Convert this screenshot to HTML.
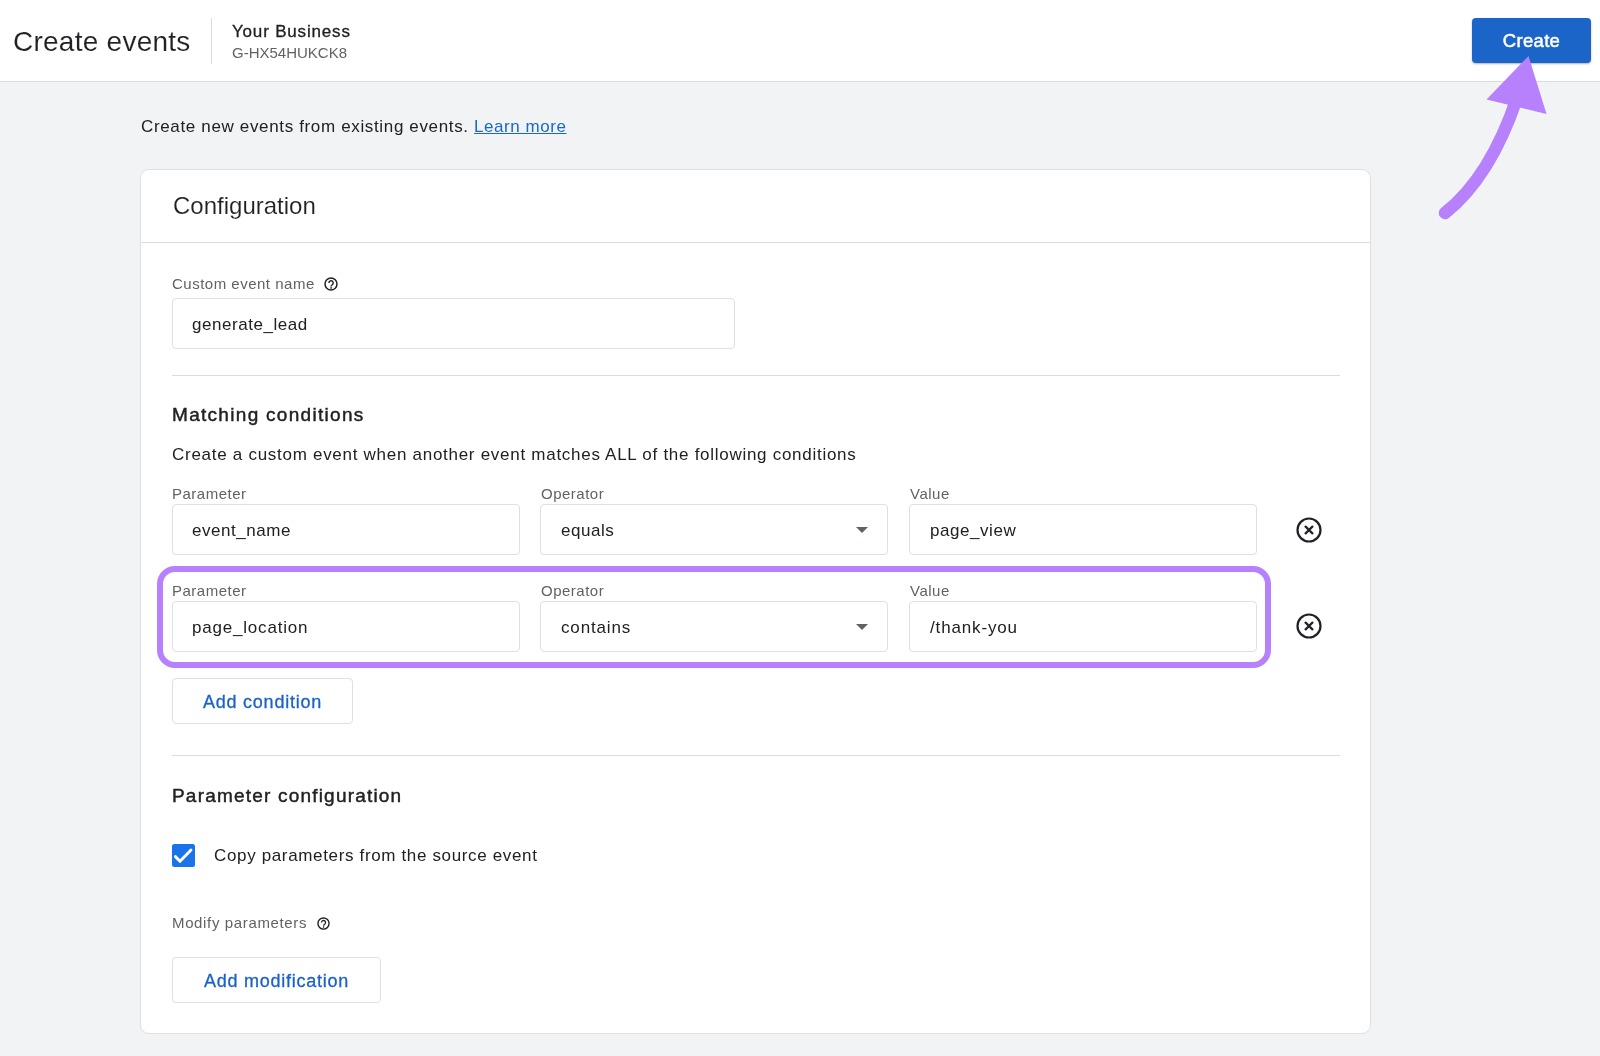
<!DOCTYPE html>
<html><head><meta charset="utf-8">
<style>
*{box-sizing:border-box;margin:0;padding:0}
html,body{will-change:transform;width:1600px;height:1056px;overflow:hidden;background:#f1f3f4;font-family:"Liberation Sans",sans-serif;color:#202124}
.a{position:absolute;white-space:nowrap}
#hdr{position:absolute;left:0;top:0;width:1600px;height:82px;background:#fff;border-bottom:1px solid #dadce0}
.title{left:13px;top:24px;font-size:28px;letter-spacing:.25px;-webkit-text-stroke:.12px #fff;line-height:36px;color:#202124}
.vdiv{left:211px;top:18px;width:1px;height:46px;background:#dadce0}
.biz{left:232px;top:21px;font-size:17px;font-weight:400;line-height:22px;letter-spacing:.82px;-webkit-text-stroke:.3px #202124}
.gid{left:232px;top:43px;font-size:15px;line-height:20px;color:#5f6368}
.cbtn{left:1472px;top:18px;width:119px;height:45px;background:#1b65c9;border-radius:4px;box-shadow:0 1px 2px rgba(0,0,0,.3);color:#fff;font-size:18.5px;font-weight:400;text-align:center;line-height:45px;letter-spacing:.3px;-webkit-text-stroke:.5px #fff}
.intro{left:141px;top:117px;font-size:17px;line-height:20px;letter-spacing:.65px}
.intro span{color:#1967d2;text-decoration:underline;letter-spacing:.55px}
#card{position:absolute;left:140px;top:169px;width:1231px;height:865px;background:#fff;border:1px solid #dfe0e2;border-radius:9px}
.cfg{left:173px;top:192px;font-size:24px;line-height:28px;-webkit-text-stroke:.12px #fff}
.hline{height:1px;background:#dadce0}
.lbl{font-size:15px;line-height:18px;color:#5f6368;letter-spacing:.5px}
.inp{position:absolute;border:1px solid #e0e0e0;border-radius:4px;background:#fff}
.val{font-size:17px;line-height:20px;color:#202124;letter-spacing:.55px}
.h2{font-size:19px;font-weight:400;line-height:24px;-webkit-text-stroke:.45px #202124}
.btn{position:absolute;border:1px solid #e0e0e0;border-radius:4px;background:#fff;color:#1a62c9;font-size:18px;line-height:46px;text-align:center;letter-spacing:.75px;-webkit-text-stroke:.3px #1a62c9}
.help{position:absolute;width:14px;height:14px}
.x{position:absolute;width:26px;height:26px}
.caret{position:absolute;width:0;height:0;border-left:6px solid transparent;border-right:6px solid transparent;border-top:6px solid #5f6368}
</style></head><body>
<div id="hdr"></div>
<div class="a title">Create events</div>
<div class="a vdiv"></div>
<div class="a biz">Your Business</div>
<div class="a gid">G-HX54HUKCK8</div>
<div class="a cbtn">Create</div>

<div class="a intro">Create new events from existing events. <span>Learn more</span></div>

<div id="card"></div>
<div class="a cfg">Configuration</div>
<div class="a hline" style="left:141px;top:242px;width:1229px"></div>

<div class="a lbl" style="left:172px;top:275px">Custom event name</div>
<svg class="help" style="left:324px;top:276.5px" viewBox="0 0 14 14"><circle cx="7" cy="7" r="6" fill="none" stroke="#202124" stroke-width="1.5"/><path d="M4.9 5.9A2.15 2.15 0 1 1 8.5 7.5C7.6 8.2 7.1 8.6 7.1 9.5" fill="none" stroke="#202124" stroke-width="1.4"/><circle cx="7.1" cy="10.9" r=".85" fill="#202124"/></svg>
<div class="inp" style="left:172px;top:298px;width:563px;height:51px"></div>
<div class="a val" style="left:192px;top:315px">generate_lead</div>

<div class="a hline" style="left:172px;top:375px;width:1168px"></div>

<div class="a h2" style="left:172px;top:403px;letter-spacing:1.3px">Matching conditions</div>
<div class="a val" style="left:172px;top:445px;letter-spacing:.72px;color:#202124">Create a custom event when another event matches ALL of the following conditions</div>

<div class="a lbl" style="left:172px;top:485px">Parameter</div>
<div class="a lbl" style="left:541px;top:485px">Operator</div>
<div class="a lbl" style="left:910px;top:485px">Value</div>
<div class="inp" style="left:172px;top:504px;width:348px;height:51px"></div>
<div class="inp" style="left:540px;top:504px;width:348px;height:51px"></div>
<div class="inp" style="left:909px;top:504px;width:348px;height:51px"></div>
<div class="a val" style="left:192px;top:521px">event_name</div>
<div class="a val" style="left:561px;top:521px">equals</div>
<div class="caret" style="left:856px;top:527px"></div>
<div class="a val" style="left:930px;top:521px">page_view</div>
<svg class="x" style="left:1296px;top:517px" viewBox="0 0 26 26"><circle cx="13" cy="13" r="11.5" fill="none" stroke="#202124" stroke-width="2.2"/><path d="M9 9L17 17M17 9L9 17" stroke="#202124" stroke-width="2.4"/></svg>

<div class="a lbl" style="left:172px;top:582px">Parameter</div>
<div class="a lbl" style="left:541px;top:582px">Operator</div>
<div class="a lbl" style="left:910px;top:582px">Value</div>
<div class="inp" style="left:172px;top:601px;width:348px;height:51px"></div>
<div class="inp" style="left:540px;top:601px;width:348px;height:51px"></div>
<div class="inp" style="left:909px;top:601px;width:348px;height:51px"></div>
<div class="a val" style="left:192px;top:618px;letter-spacing:.8px">page_location</div>
<div class="a val" style="left:561px;top:618px;letter-spacing:.85px">contains</div>
<div class="caret" style="left:856px;top:624px"></div>
<div class="a val" style="left:930px;top:618px;letter-spacing:.85px">/thank-you</div>
<svg class="x" style="left:1296px;top:613px" viewBox="0 0 26 26"><circle cx="13" cy="13" r="11.5" fill="none" stroke="#202124" stroke-width="2.2"/><path d="M9 9L17 17M17 9L9 17" stroke="#202124" stroke-width="2.4"/></svg>

<div class="a" style="left:157px;top:566px;width:1114px;height:102px;border:6px solid #b780fc;border-radius:18px"></div>

<div class="btn" style="left:172px;top:678px;width:181px;height:46px">Add condition</div>

<div class="a hline" style="left:172px;top:755px;width:1168px"></div>
<div class="a h2" style="left:172px;top:784px;letter-spacing:1.2px">Parameter configuration</div>

<svg class="a" style="left:172px;top:844px" width="23" height="23" viewBox="0 0 23 23"><rect x="0" y="0" width="23" height="23" rx="2.5" fill="#1a73e8"/><path d="M3.4 12.6L8 17.2L19 6" fill="none" stroke="#fff" stroke-width="2.9" stroke-linecap="round" stroke-linejoin="miter"/></svg>
<div class="a val" style="left:214px;top:846px;letter-spacing:.65px">Copy parameters from the source event</div>

<div class="a lbl" style="left:172px;top:914px;letter-spacing:.64px">Modify parameters</div>
<svg class="help" style="left:316.5px;top:916.5px;width:13px;height:13px" viewBox="0 0 14 14"><circle cx="7" cy="7" r="6" fill="none" stroke="#202124" stroke-width="1.5"/><path d="M4.9 5.9A2.15 2.15 0 1 1 8.5 7.5C7.6 8.2 7.1 8.6 7.1 9.5" fill="none" stroke="#202124" stroke-width="1.4"/><circle cx="7.1" cy="10.9" r=".85" fill="#202124"/></svg>

<div class="btn" style="left:172px;top:957px;width:209px;height:46px">Add modification</div>

<svg class="a" style="left:0;top:0" width="1600" height="1056" viewBox="0 0 1600 1056">
<path d="M1445 213 C1473 191 1498 154 1517 98" fill="none" stroke="#b780fc" stroke-width="12.5" stroke-linecap="round"/>
<path d="M1486.5 99.5 L1528.5 56 L1546.5 114 Z" fill="#b780fc"/>
</svg>
</body></html>
